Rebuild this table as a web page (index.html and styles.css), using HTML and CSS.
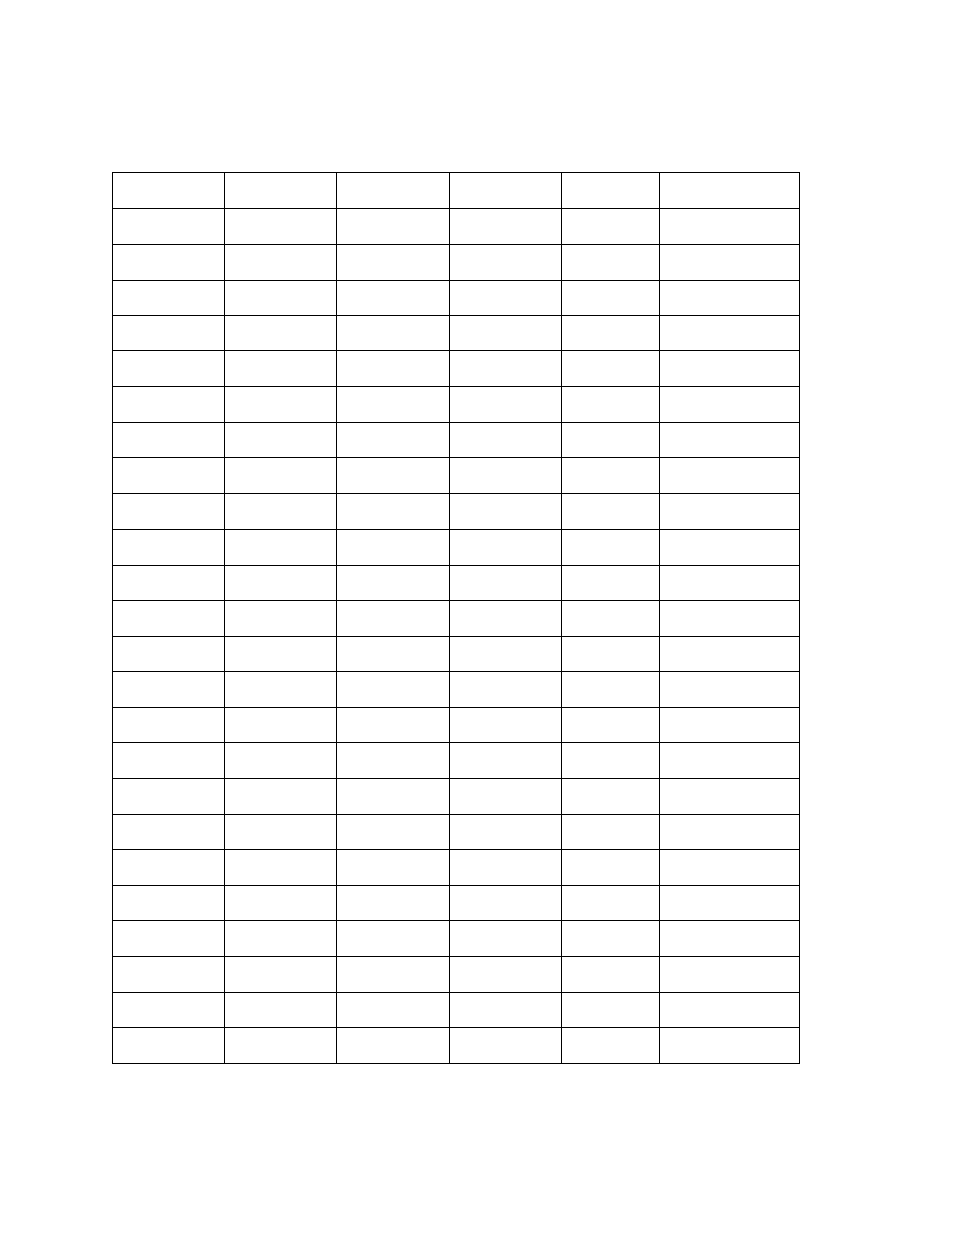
FILE: index.html
```html
<!DOCTYPE html>
<html>
<head>
<meta charset="utf-8">
<link rel="stylesheet" href="styles.css">
</head>
<body>
<div class="page">
<div class="grid">
<div></div><div></div><div></div><div></div><div></div><div></div>
<div></div><div></div><div></div><div></div><div></div><div></div>
<div></div><div></div><div></div><div></div><div></div><div></div>
<div></div><div></div><div></div><div></div><div></div><div></div>
<div></div><div></div><div></div><div></div><div></div><div></div>
<div></div><div></div><div></div><div></div><div></div><div></div>
<div></div><div></div><div></div><div></div><div></div><div></div>
<div></div><div></div><div></div><div></div><div></div><div></div>
<div></div><div></div><div></div><div></div><div></div><div></div>
<div></div><div></div><div></div><div></div><div></div><div></div>
<div></div><div></div><div></div><div></div><div></div><div></div>
<div></div><div></div><div></div><div></div><div></div><div></div>
<div></div><div></div><div></div><div></div><div></div><div></div>
<div></div><div></div><div></div><div></div><div></div><div></div>
<div></div><div></div><div></div><div></div><div></div><div></div>
<div></div><div></div><div></div><div></div><div></div><div></div>
<div></div><div></div><div></div><div></div><div></div><div></div>
<div></div><div></div><div></div><div></div><div></div><div></div>
<div></div><div></div><div></div><div></div><div></div><div></div>
<div></div><div></div><div></div><div></div><div></div><div></div>
<div></div><div></div><div></div><div></div><div></div><div></div>
<div></div><div></div><div></div><div></div><div></div><div></div>
<div></div><div></div><div></div><div></div><div></div><div></div>
<div></div><div></div><div></div><div></div><div></div><div></div>
<div></div><div></div><div></div><div></div><div></div><div></div>
</div>
</div>
</body>
</html>
```
FILE: styles.css
```css
html, body {
  margin: 0;
  padding: 0;
  background: #fff;
  font-family: "Liberation Sans", Arial, sans-serif;
}
.page {
  padding: 172px 0 0 112px;
  width: 954px;
  height: 1235px;
  box-sizing: border-box;
}
.grid {
  display: grid;
  grid-template-columns: 112px 112px 113px 112px 98px 140px;
  grid-template-rows: 36px 36px 36px 35px 35px 36px 36px 35px 36px 36px 36px 35px 36px 35px 36px 35px 36px 36px 35px 36px 35px 36px 36px 35px 36px;
  width: max-content;
  border-left: 1px solid #000;
  border-top: 1px solid #000;
}
.grid > div {
  box-sizing: border-box;
  border-right: 1px solid #000;
  border-bottom: 1px solid #000;
}
```
